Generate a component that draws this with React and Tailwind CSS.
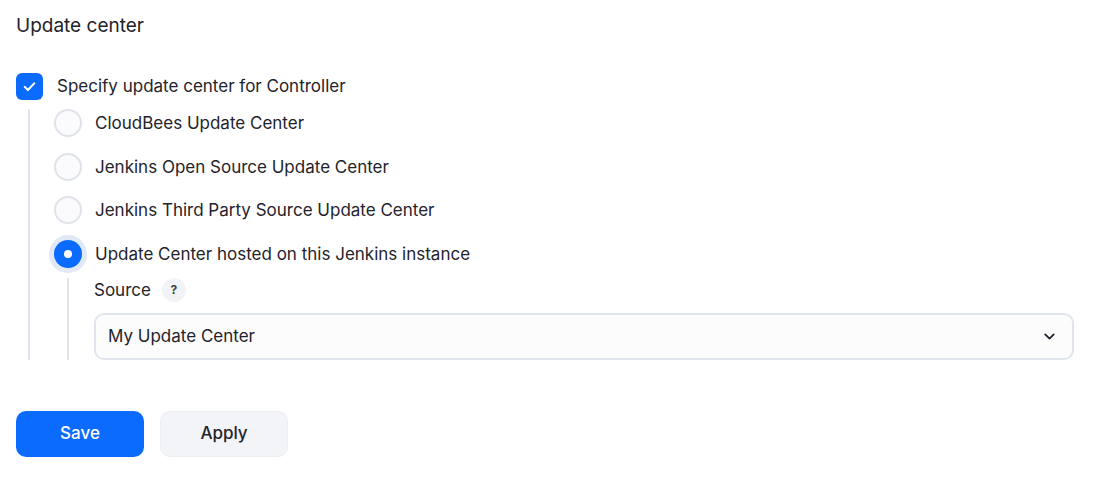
import { useState } from 'react'

const OPTIONS = [
  'CloudBees Update Center',
  'Jenkins Open Source Update Center',
  'Jenkins Third Party Source Update Center',
  'Update Center hosted on this Jenkins instance',
]

function Radio({ checked }) {
  if (checked) {
    return (
      <span className="flex h-7 w-7 shrink-0 items-center justify-center rounded-full bg-[#0b6bff] ring-[5px] ring-[#e1e9f7]">
        <span className="h-2 w-2 rounded-full bg-white" />
      </span>
    )
  }
  return <span className="h-7 w-7 shrink-0 rounded-full border-2 border-[#dfe3ea] bg-[#fbfbfd]" />
}

export default function App() {
  const [selected, setSelected] = useState(3)
  const [enabled, setEnabled] = useState(true)

  return (
    <div className="min-h-[480px] bg-white pl-4 pr-[26px] pt-[13px] text-[#1f232b]" style={{ fontFamily: 'Inter, "Noto Sans", sans-serif' }}>
      <h2 className="text-[19px] leading-[26px]">Update center</h2>

      <label className="mt-[33px] flex items-center gap-[14px] text-[17px] leading-7" onClick={() => setEnabled(!enabled)}>
        <span className="flex h-[27px] w-[27px] items-center justify-center rounded-[6px] bg-[#0b6bff]">
          <svg width="19" height="19" viewBox="0 0 24 24" fill="none" stroke="white" strokeWidth="2.6" strokeLinecap="round" strokeLinejoin="round">
            <path d="M6 12.5l4 4L18 8" />
          </svg>
        </span>
        Specify update center for Controller
      </label>

      <div className="ml-3 mt-[9px] flex">
        <div className="w-[2px] shrink-0 bg-[#dfe4ee]" />
        <div className="flex-1 pl-[24px]">
          {OPTIONS.map((o, i) => (
            <div key={o}>
              <div className="flex h-[28px] cursor-pointer items-center gap-[13px] text-[17px] leading-7 mb-[15.5px]" onClick={() => setSelected(i)}>
                <Radio checked={selected === i} />
                {o}
              </div>
            </div>
          ))}
          <div className="-mt-[5px] ml-[13px] flex">
            <div className="w-[2px] shrink-0 bg-[#dfe4ee]" />
            <div className="flex-1 pl-[25px]">
              <div className="flex items-center gap-[11px] text-[17px] leading-6">
                Source
                <span className="flex h-6 w-6 items-center justify-center rounded-full bg-[#f1f3f7] text-[12px] font-bold text-[#3a3f48]">?</span>
              </div>
              <div className="mt-[11px] flex h-[47px] items-center justify-between rounded-[10px] border-2 border-[#e0e5ee] bg-[#fcfcfd] pl-3 pr-[14px] text-[17px]">
                My Update Center
                <svg width="17" height="17" viewBox="0 0 24 24" fill="none" stroke="#1f232b" strokeWidth="2.6" strokeLinecap="round" strokeLinejoin="round">
                  <path d="M6 9l6 6 6-6" />
                </svg>
              </div>
            </div>
          </div>
        </div>
      </div>

      <div className="mt-[51px] flex gap-4">
        <button className="h-[46px] w-32 rounded-[10px] bg-[#0b6bff] text-[17px] font-medium text-white">Save</button>
        <button className="h-[46px] w-32 rounded-[10px] border border-[#eceef3] bg-[#f3f4f8] text-[17px] font-medium text-[#1f232b]">Apply</button>
      </div>
    </div>
  )
}
